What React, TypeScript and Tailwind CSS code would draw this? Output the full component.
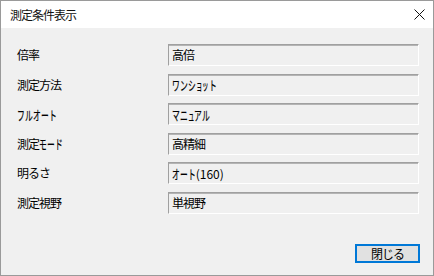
import React from "react";

const rows: [string, string][] = [
  ["倍率", "高倍"],
  ["測定方法", "ワンショット"],
  ["フルオート", "マニュアル"],
  ["測定モード", "高精細"],
  ["明るさ", "オート(160)"],
  ["測定視野", "単視野"],
];

const SMALL = "ャュョッァィゥェォ";

function JText({ text }: { text: string }) {
  return (
    <span className="tracking-[-1px] whitespace-nowrap">
      {Array.from(text).map((c, i) => {
        if (/[\u30A0-\u30FF]/.test(c)) {
          const small = SMALL.includes(c);
          return small ? (
            <span key={i} className="inline-block w-[6.6px] tracking-normal">
              <span className="inline-block origin-left text-[13px] [transform:scaleX(0.5)] [-webkit-text-stroke:0.2px_black]">
                {c}
              </span>
            </span>
          ) : (
            <span key={i} className="inline-block w-[7.9px] tracking-normal">
              <span className="inline-block origin-left text-[13px] [transform:scaleX(0.6)] [-webkit-text-stroke:0.2px_black]">
                {c}
              </span>
            </span>
          );
        }
        if (/[0-9()]/.test(c)) {
          return (
            <span key={i} className="tracking-normal">
              {c}
            </span>
          );
        }
        return <span key={i}>{c}</span>;
      })}
    </span>
  );
}

export default function App() {
  return (
    <div
      className="w-[434px] h-[276px] border border-[#9a9a9a] flex flex-col bg-[#f0f0f0] text-black text-[12px] leading-none"
      style={{ fontFamily: '"Noto Sans CJK JP", "Noto Sans", sans-serif' }}
    >
      <div className="h-[27px] bg-white flex items-center pl-[9px] pr-[8px]">
        <span className="text-[12px] text-[#111]">
          <JText text="測定条件表示" />
        </span>
        <svg className="ml-auto" width="11" height="11" viewBox="0 0 11 11">
          <path d="M0.5 0.5 L10.5 10.5 M10.5 0.5 L0.5 10.5" stroke="#111" strokeWidth="1" fill="none" />
        </svg>
      </div>
      <div className="flex-1 flex flex-col pt-[16px] pl-[16px] pr-[13px] pb-[12px]">
        <div className="flex flex-col gap-[7.6px]">
          {rows.map(([label, value]) => (
            <div key={label} className="flex items-center h-[22px]">
              <div className="w-[151px]">
                <JText text={label} />
              </div>
              <div className="w-[251px] h-[22px] flex items-center pl-[3px] border-l border-t border-[#a0a0a0] border-r border-b border-r-white border-b-white shadow-[inset_0_1px_0_#b4b4b4]">
                <JText text={value} />
              </div>
            </div>
          ))}
        </div>
        <div className="mt-auto flex justify-end">
          <button className="w-[65px] h-[19px] bg-[#e1e1e1] border-2 border-[#0078d7] flex items-center justify-center text-[12px] leading-none">
            <JText text="閉じる" />
          </button>
        </div>
      </div>
    </div>
  );
}
